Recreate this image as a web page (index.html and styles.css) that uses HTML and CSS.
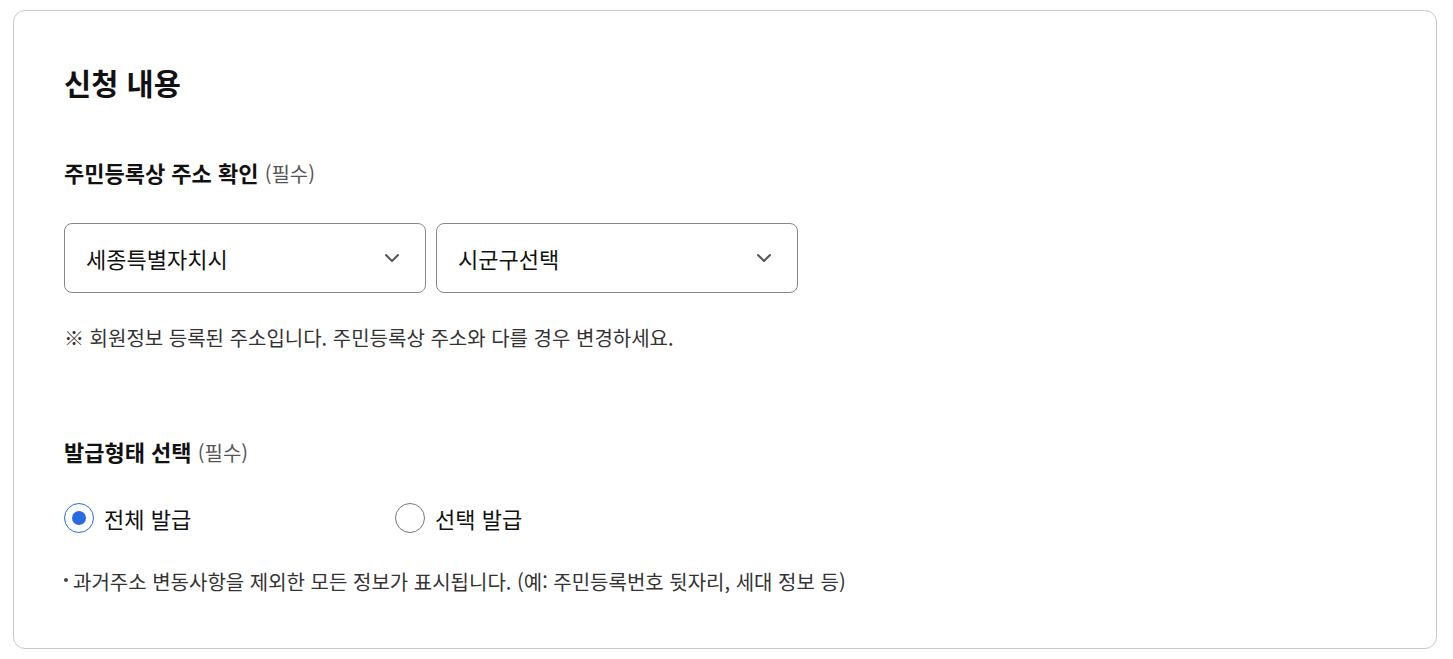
FILE: index.html
```html
<!DOCTYPE html>
<html lang="ko">
<head>
<meta charset="UTF-8">
<meta name="viewport" content="width=device-width, initial-scale=1.0">
<title>신청 내용</title>
<link rel="stylesheet" href="styles.css">
</head>
<body>

<section class="card">
  <h2 class="card-title">신청 내용</h2>

  <div class="field">
    <h3 class="field-label">주민등록상 주소 확인 <span class="required">(필수)</span></h3>
    <div class="select-row">
      <div class="select-box">
        <span>세종특별자치시</span>
        <svg class="chevron" width="16" height="10" viewBox="0 0 16 10"><path d="M2 2l6 6 6-6" fill="none" stroke="#555" stroke-width="2" stroke-linecap="round" stroke-linejoin="round"/></svg>
      </div>
      <div class="select-box">
        <span>시군구선택</span>
        <svg class="chevron" width="16" height="10" viewBox="0 0 16 10"><path d="M2 2l6 6 6-6" fill="none" stroke="#555" stroke-width="2" stroke-linecap="round" stroke-linejoin="round"/></svg>
      </div>
    </div>
    <p class="note">※ 회원정보 등록된 주소입니다. 주민등록상 주소와 다를 경우 변경하세요.</p>
  </div>

  <div class="field field-issue">
    <h3 class="field-label">발급형태 선택 <span class="required">(필수)</span></h3>
    <div class="radio-row">
      <label class="radio-item">
        <span class="radio checked"></span>
        전체 발급
      </label>
      <label class="radio-item">
        <span class="radio"></span>
        선택 발급
      </label>
    </div>
    <p class="bullet">과거주소 변동사항을 제외한 모든 정보가 표시됩니다. (예: 주민등록번호 뒷자리, 세대 정보 등)</p>
  </div>
</section>

</body>
</html>
```

FILE: styles.css
```css
body {
  font-family: "Noto Sans CJK KR", "Noto Sans", sans-serif;
  background-color: #fff;
  color: #111;
  margin: 0;
  padding: 10px 16px 10px 13px;
}

.card {
  border: 1px solid #c8c8c8;
  border-radius: 12px;
  padding: 51px 50px 53px 50px;
}

.card-title {
  font-size: 29.5px;
  font-weight: bold;
  line-height: 40px;
  margin: 0 0 56px;
}

.field-label {
  font-size: 22px;
  font-weight: bold;
  line-height: 28px;
  margin: 0;
}

.required {
  font-size: 20px;
  font-weight: normal;
  color: #555;
}

.select-row {
  display: flex;
  gap: 10px;
  margin-top: 35px;
}

.select-box {
  width: 362px;
  height: 70px;
  box-sizing: border-box;
  border: 1px solid #888;
  border-radius: 8px;
  padding: 0 25px 0 21px;
  display: flex;
  align-items: center;
  justify-content: space-between;
  font-size: 22px;
  color: #111;
}

.note {
  font-size: 20px;
  line-height: 26px;
  color: #333;
  margin: 32px 0 0;
}

.field-issue {
  margin-top: 86px;
}

.radio-row {
  display: flex;
  margin-top: 36px;
}

.radio-item {
  display: flex;
  align-items: center;
  gap: 10px;
  width: 331px;
  font-size: 22px;
  line-height: 30px;
  color: #111;
}

.radio {
  width: 30px;
  height: 30px;
  box-sizing: border-box;
  border: 1px solid #777;
  border-radius: 50%;
  display: flex;
  align-items: center;
  justify-content: center;
}

.radio.checked {
  border: 1.5px solid #2a6ae0;
}

.radio.checked::after {
  content: "";
  width: 14px;
  height: 14px;
  border-radius: 50%;
  background-color: #2a6ae0;
}

.bullet {
  font-size: 20px;
  line-height: 26px;
  color: #333;
  margin: 36px 0 0;
  display: flex;
  align-items: center;
  gap: 5px;
}

.bullet::before {
  content: "";
  width: 4px;
  height: 4px;
  margin-top: -4px;
  border-radius: 50%;
  background-color: #444;
}
```
